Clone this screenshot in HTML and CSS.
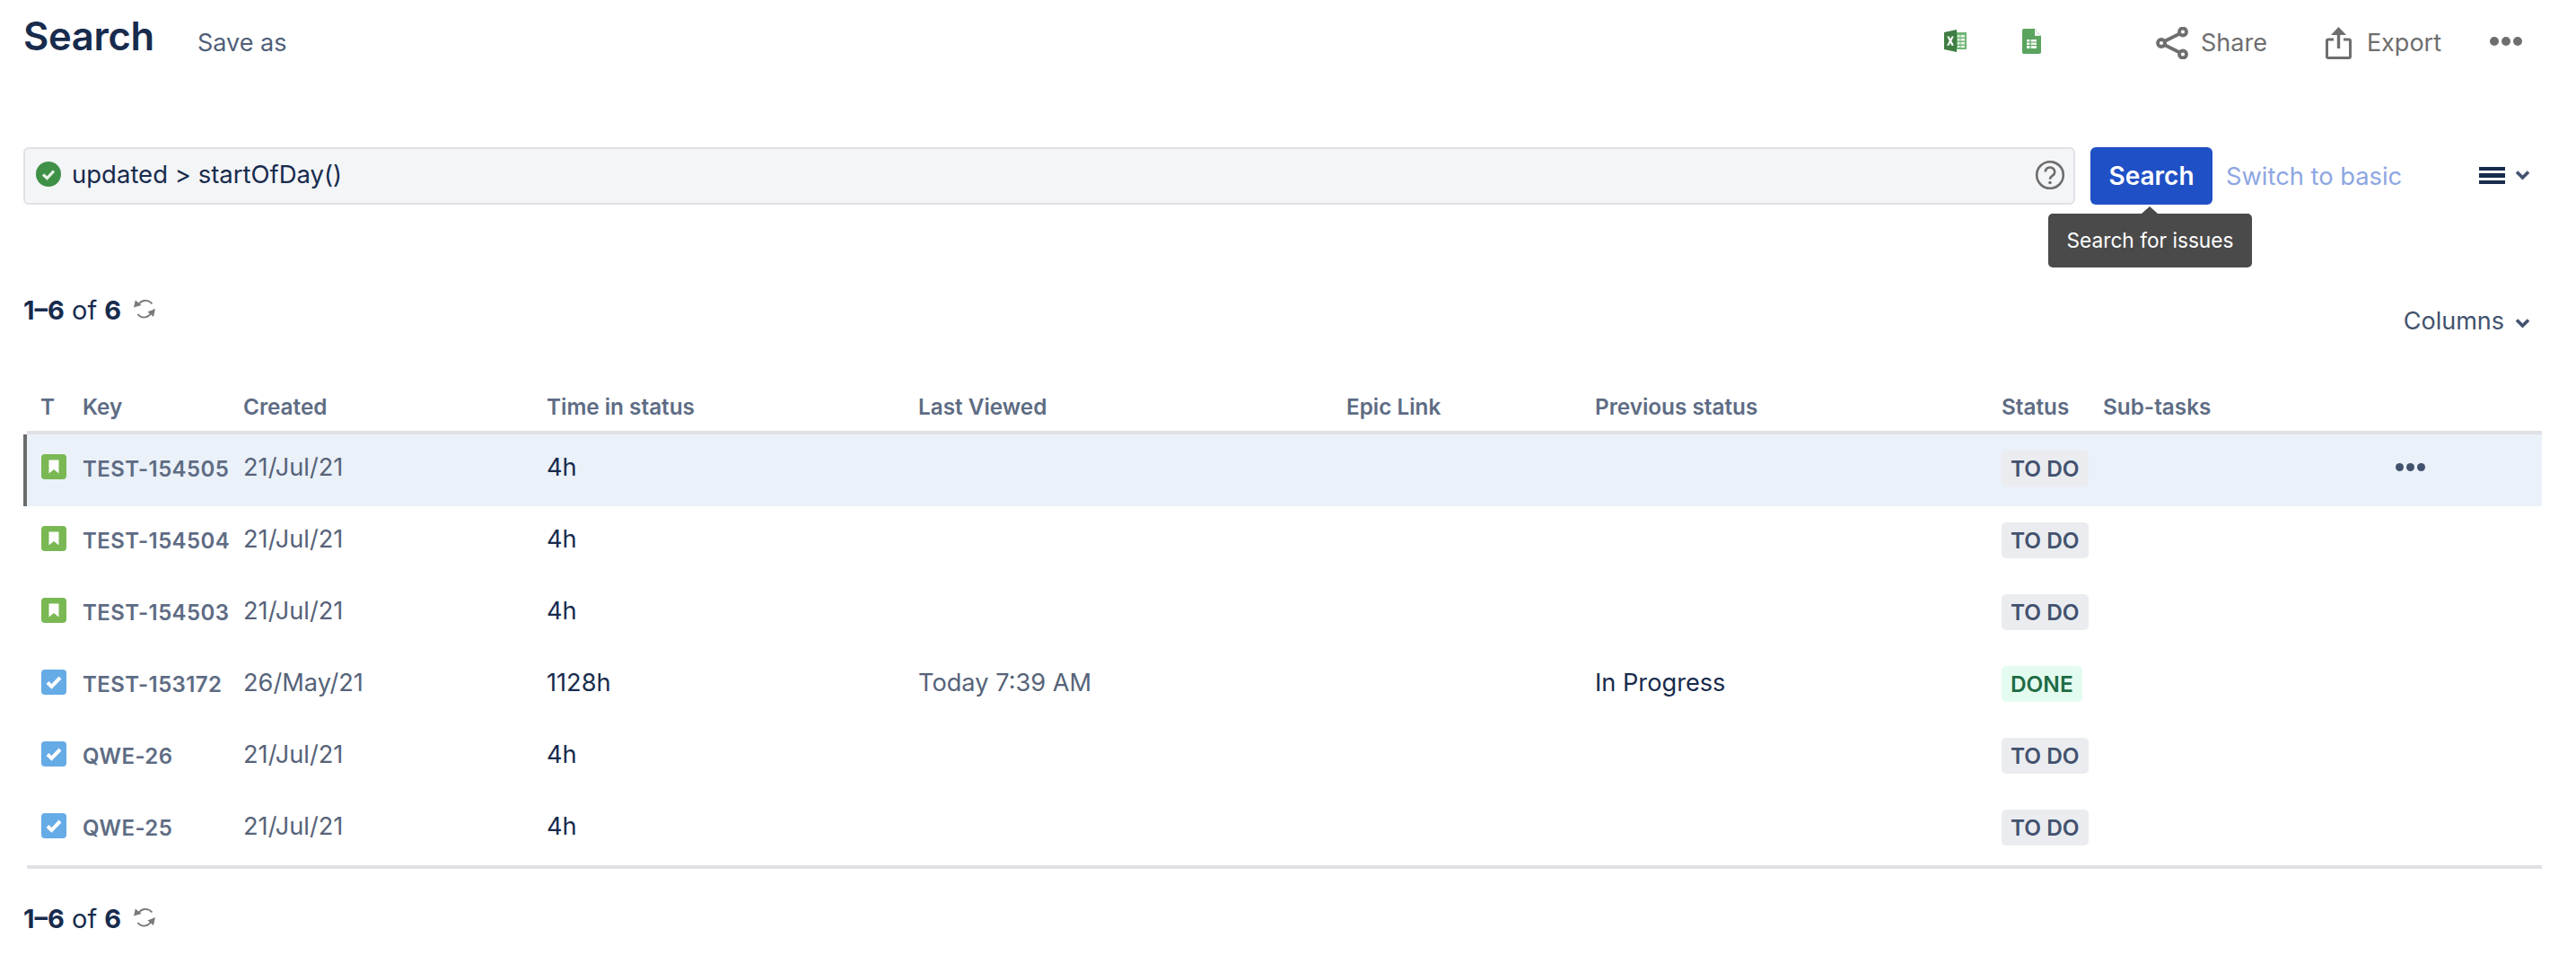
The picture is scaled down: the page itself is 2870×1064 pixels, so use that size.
FILE: index.html
```html
<!DOCTYPE html>
<html lang="en">
<head>
<meta charset="utf-8">
<title>Search</title>
<link rel="stylesheet" href="styles.css">
</head>
<body>
<header class="topbar">
  <h1 class="title">Search</h1>
  <span class="save-as">Save as</span>
  <div class="actions">
    <svg class="ic-excel" viewBox="0 0 25 25" aria-hidden="true"><rect x="11" y="3" width="14" height="19" fill="#6fb573"/><path d="M0 3 L14 0 V25 L0 22 Z" fill="#3f7d43"/><path d="M15 6h2.500v2.500H15zM18.500 6H23v2.500h-4.500zM15 10h2.500v2.500H15zM18.500 10H23v2.500h-4.500zM15 14h2.500v2.500H15zM18.500 14H23v2.500h-4.500zM15 18h2.500v2H15zM18.500 18H23v2h-4.500z" fill="#e9f4ea"/><path d="M3.200 7.500h2.400l1.400 3 1.500-3h2.300l-2.500 5 2.600 5.200H8.300l-1.400-3.100-1.500 3.100H3.100l2.600-5.200z" fill="#fff"/></svg>
    <svg class="ic-sheet" viewBox="0 0 21 28" aria-hidden="true"><path d="M2 0 H14 L21 8 V26 a2 2 0 0 1 -2 2 H2 a2 2 0 0 1 -2 -2 V2 a2 2 0 0 1 2 -2 Z" fill="#5aa45f"/><path d="M14 0 L21 8 H14 Z" fill="#eef3ee"/><path d="M5 12h11v10H5z" fill="#f0f7f0"/><path d="M5 15h11M5 18.500h11M9 12v10" stroke="#5aa45f" stroke-width="1.200"/></svg>
    <span class="action share">
      <svg class="ic-share" viewBox="0 0 36 36" aria-hidden="true"><g fill="none" stroke="#6e6e6e" stroke-width="3.800"><circle cx="6" cy="18" r="4"/><circle cx="30" cy="5.500" r="4"/><circle cx="30" cy="30.500" r="4"/><path d="M9.500 16 L26.500 7.500M9.500 20 L26.500 28.500"/></g></svg>
      <span>Share</span>
    </span>
    <span class="action export">
      <svg class="ic-export" viewBox="0 0 30 36" aria-hidden="true"><path d="M9 14 H3 a1.500 1.500 0 0 0 -1.500 1.500 V33 a1.500 1.500 0 0 0 1.500 1.500 H26 a1.500 1.500 0 0 0 1.500 -1.500 V15.500 a1.500 1.500 0 0 0 -1.500 -1.500 H20" fill="none" stroke="#6e6e6e" stroke-width="3"/><path d="M14.500 6 V24" stroke="#6e6e6e" stroke-width="3.400"/><path d="M14.500 0 L23 9 H6 Z" fill="#6e6e6e"/></svg>
      <span>Export</span>
    </span>
    <span class="dots dots-top"><i></i><i></i><i></i></span>
  </div>
</header>

<section class="query-row">
  <div class="query">
    <svg class="ic-ok" viewBox="0 0 28 28" aria-hidden="true"><circle cx="14" cy="14" r="14" fill="#3f9147"/><path d="M8 14.500 L12.500 18.500 L20 10.500" fill="none" stroke="#e8f3e9" stroke-width="3.200"/></svg>
    <span class="query-text">updated &gt; startOfDay()</span>
    <svg class="ic-help" viewBox="0 0 34 34" aria-hidden="true"><circle cx="17" cy="17" r="14.800" fill="none" stroke="#6e6e6e" stroke-width="2.600"/><path d="M11.800 13.500 a5.200 5 0 1 1 8 4.200 c-1.800 1.200 -2.800 2 -2.800 4" fill="none" stroke="#6e6e6e" stroke-width="2.600"/><circle cx="17" cy="25.500" r="1.800" fill="#6e6e6e"/></svg>
  </div>
  <div class="search-wrap">
    <button class="search-btn" type="button">Search</button>
    <div class="tooltip">Search for issues</div>
  </div>
  <span class="switch">Switch to basic</span>
  <span class="menu">
    <span class="bars"><i></i><i></i><i></i></span>
    <svg class="chev" viewBox="0 0 17 12" aria-hidden="true"><path d="M2 2.500 L8.500 9 L15 2.500" fill="none" stroke="#42526e" stroke-width="3.600"/></svg>
  </span>
</section>

<section class="summary-row">
  <div class="summary">
    <span class="count"><b>1–6</b> of <b>6</b></span>
    <svg class="ic-refresh" viewBox="0 0 24 24" aria-hidden="true"><path d="M5 8.500 C7 3 15 0 20.500 6.500 M20 15.500 C17 22 9 24 4.500 18" fill="none" stroke="#7a7a7a" stroke-width="1.800"/><path d="M0 10.500 L1.800 2.500 L8.500 8 Z M24 12 L22 21 L15.500 15.500 Z" fill="#7a7a7a"/></svg>
  </div>
  <span class="columns">Columns
    <svg class="chev" viewBox="0 0 17 12" aria-hidden="true"><path d="M2 2.500 L8.500 9 L15 2.500" fill="none" stroke="#42526e" stroke-width="3.600"/></svg>
  </span>
</section>

<section class="table">
  <div class="row head">
    <span class="h-t">T</span><span>Key</span><span>Created</span><span>Time in status</span><span>Last Viewed</span><span>Epic Link</span><span>Previous status</span><span>Status</span><span>Sub-tasks</span>
  </div>
  <div class="row issue selected">
    <span><svg class="ic-type" viewBox="0 0 28 28"><rect width="28" height="28" rx="4" fill="#7ab853"/><path d="M8.500 6.500h11v15L14 17l-5.500 4.500z" fill="#fff"/></svg></span>
    <span class="key">TEST-154505</span><span class="date">21/Jul/21</span><span class="strong">4h</span><span></span><span></span><span></span>
    <span><span class="badge">TO DO</span></span><span class="more"><span class="dots dots-row"><i></i><i></i><i></i></span></span>
  </div>
  <div class="row issue">
    <span><svg class="ic-type" viewBox="0 0 28 28"><rect width="28" height="28" rx="4" fill="#7ab853"/><path d="M8.500 6.500h11v15L14 17l-5.500 4.500z" fill="#fff"/></svg></span>
    <span class="key">TEST-154504</span><span class="date">21/Jul/21</span><span class="strong">4h</span><span></span><span></span><span></span>
    <span><span class="badge">TO DO</span></span><span></span>
  </div>
  <div class="row issue">
    <span><svg class="ic-type" viewBox="0 0 28 28"><rect width="28" height="28" rx="4" fill="#7ab853"/><path d="M8.500 6.500h11v15L14 17l-5.500 4.500z" fill="#fff"/></svg></span>
    <span class="key">TEST-154503</span><span class="date">21/Jul/21</span><span class="strong">4h</span><span></span><span></span><span></span>
    <span><span class="badge">TO DO</span></span><span></span>
  </div>
  <div class="row issue">
    <span><svg class="ic-type" viewBox="0 0 28 28"><rect width="28" height="28" rx="4" fill="#65abe6"/><path d="M7 14.500l4.500 4.500 9.500-10" fill="none" stroke="#fff" stroke-width="4"/></svg></span>
    <span class="key">TEST-153172</span><span class="date">26/May/21</span><span class="strong">1128h</span><span class="date">Today 7:39 AM</span><span></span><span class="strong">In Progress</span>
    <span><span class="badge done">DONE</span></span><span></span>
  </div>
  <div class="row issue">
    <span><svg class="ic-type" viewBox="0 0 28 28"><rect width="28" height="28" rx="4" fill="#65abe6"/><path d="M7 14.500l4.500 4.500 9.500-10" fill="none" stroke="#fff" stroke-width="4"/></svg></span>
    <span class="key">QWE-26</span><span class="date">21/Jul/21</span><span class="strong">4h</span><span></span><span></span><span></span>
    <span><span class="badge">TO DO</span></span><span></span>
  </div>
  <div class="row issue">
    <span><svg class="ic-type" viewBox="0 0 28 28"><rect width="28" height="28" rx="4" fill="#65abe6"/><path d="M7 14.500l4.500 4.500 9.500-10" fill="none" stroke="#fff" stroke-width="4"/></svg></span>
    <span class="key">QWE-25</span><span class="date">21/Jul/21</span><span class="strong">4h</span><span></span><span></span><span></span>
    <span><span class="badge">TO DO</span></span><span></span>
  </div>
</section>

<footer class="summary foot">
  <span class="count"><b>1–6</b> of <b>6</b></span>
  <svg class="ic-refresh" viewBox="0 0 24 24" aria-hidden="true"><path d="M5 8.500 C7 3 15 0 20.500 6.500 M20 15.500 C17 22 9 24 4.500 18" fill="none" stroke="#7a7a7a" stroke-width="1.800"/><path d="M0 10.500 L1.800 2.500 L8.500 8 Z M24 12 L22 21 L15.500 15.500 Z" fill="#7a7a7a"/></svg>
</footer>
</body>
</html>
```
FILE: styles.css
```css
* { box-sizing: border-box; }
html, body { margin: 0; padding: 0; }
body {
  width: 2870px;
  height: 1064px;
  overflow: hidden;
  background: #fff;
  font-family: Inter, "Noto Sans", sans-serif;
  color: #172b4d;
}
svg { display: block; flex: none; }

/* top bar */
.topbar {
  display: flex;
  align-items: flex-start;
  height: 164px;
  padding: 0 60px 0 26px;
}
.title {
  margin: 14px 0 0;
  font-size: 43.500px;
  line-height: 52px;
  font-weight: 600;
  letter-spacing: -0.3px;
  color: #172b4d;
}
.save-as {
  margin: 30px 0 0 48px;
  font-size: 27px;
  line-height: 36px;
  color: #505f79;
}
.actions {
  display: flex;
  align-items: flex-start;
  margin-left: auto;
  height: 70px;
  color: #6e6e6e;
  font-size: 27px;
}
.ic-excel { width: 25px; height: 25px; margin-top: 33px; }
.ic-sheet { width: 21px; height: 28px; margin: 32px 0 0 62px; }
.action { display: flex; align-items: flex-start; }
.action span { line-height: 36px; margin-top: 30px; }
.share { margin-left: 128px; }
.ic-share { width: 36px; height: 36px; margin: 30px 14px 0 0; }
.export { margin-left: 65px; }
.ic-export { width: 30px; height: 36px; margin: 30px 16px 0 0; }
.dots { display: inline-flex; }
.dots i { display: block; border-radius: 50%; background: #6e6e6e; }
.dots-top { gap: 3px; margin: 41px 0 0 54px; }
.dots-top i { width: 10px; height: 10px; }

/* query */
.query-row {
  display: flex;
  align-items: center;
  height: 64px;
  padding: 0 51px 0 26px;
}
.query {
  display: flex;
  align-items: center;
  flex: none;
  width: 2286px;
  height: 64px;
  padding: 0 9px 0 12px;
  background: #f4f5f7;
  border: 2px solid #dfe1e6;
  border-radius: 6px;
}
.ic-ok { width: 28px; height: 28px; margin-top: -4px; }
.query-text {
  margin: -4px 0 0 12px;
  font-size: 27.500px;
  line-height: 36px;
  color: #172b4d;
}
.ic-help { width: 34px; height: 34px; margin-left: auto; margin-top: -3px; }
.search-wrap { position: relative; flex: none; margin-left: 17px; }
.search-btn {
  display: block;
  width: 136px;
  height: 64px;
  padding: 0;
  border: 0;
  border-radius: 6px;
  background: #2050c5;
  color: #fff;
  font: 600 28px/64px Inter, sans-serif;
}
.tooltip {
  position: absolute;
  left: -47px;
  top: 74px;
  width: 227px;
  height: 60px;
  border-radius: 5px;
  background: #4a4a4a;
  color: #fff;
  font-size: 22.700px;
  line-height: 60px;
  text-align: center;
  white-space: nowrap;
}
.tooltip::before {
  content: "";
  position: absolute;
  left: 104px;
  top: -8px;
  border-left: 9px solid transparent;
  border-right: 9px solid transparent;
  border-bottom: 8px solid #4a4a4a;
}
.switch {
  margin-left: 15px;
  font-size: 27.300px;
  color: #8da6e2;
}
.menu { display: flex; align-items: flex-start; margin-left: auto; gap: 11px; margin-top: -1px; }
.bars { display: flex; flex-direction: column; gap: 3px; width: 29px; }
.bars i { display: block; height: 4.600px; background: #172b4d; }
.chev { width: 17px; height: 12px; margin-top: 3px; }

/* summary */
.summary-row {
  display: flex;
  justify-content: space-between;
  align-items: flex-start;
  height: 188px;
  padding: 0 51px 0 26px;
}
.summary { display: flex; align-items: flex-start; }
.summary-row .summary { margin-top: 100px; }
.count { font-size: 29px; line-height: 36px; color: #172b4d; }
.count b { font-weight: 700; }
.ic-refresh { width: 24px; height: 24px; margin: 4px 0 0 14px; }
.columns {
  display: flex;
  align-items: center;
  gap: 12px;
  margin-top: 112px;
  font-size: 27px;
  line-height: 36px;
  color: #42526e;
}

/* table */
.table { width: 2832px; padding-left: 26px; }
.row {
  display: grid;
  grid-template-columns: 62px 179px 338px 414px 477px 277px 453px 113px 482px;
}
.head {
  position: relative;
  height: 68px;
  padding: 19px 0 0 4px;
  font-size: 24.300px;
  font-weight: 600;
  line-height: 36px;
  color: #5e6c84;
}
.head::after {
  content: "";
  position: absolute;
  left: 4px;
  right: 0;
  bottom: 0;
  height: 4px;
  background: #dfe1e6;
}
.h-t { padding-left: 15px; }
.issue {
  height: 80px;
  padding-top: 16px;
  border-left: 4px solid transparent;
  font-size: 27.200px;
  line-height: 42px;
}
.selected { background: #ebf1f9; border-left-color: #6b6b6b; }
.ic-type { width: 28px; height: 28px; margin: 6px 0 0 16px; }
.key { font-size: 24px; font-weight: 600; color: #5e6c84; white-space: nowrap; padding-top: 2px; letter-spacing: .4px; }
.date { color: #566379; white-space: nowrap; }
.strong { color: #172b4d; white-space: nowrap; }
.badge {
  display: inline-block;
  height: 40px;
  padding: 0 10px;
  margin-top: 2px;
  border-radius: 5px;
  background: #ebecf0;
  color: #42526e;
  font-size: 24.400px;
  font-weight: 600;
  line-height: 40px;
  vertical-align: top;
}
.done { background: #e3fcef; color: #1f6b45; }
.more { padding: 4px 0 0 326px; }
.dots-row { gap: 3px; margin-top: 12px; vertical-align: top; }
.dots-row i { width: 9px; height: 9px; background: #42526e; }

.table::after {
  content: "";
  display: block;
  height: 4px;
  margin-left: 4px;
  background: #dfe1e6;
}
.foot { margin: 38px 0 0 26px; }
```
